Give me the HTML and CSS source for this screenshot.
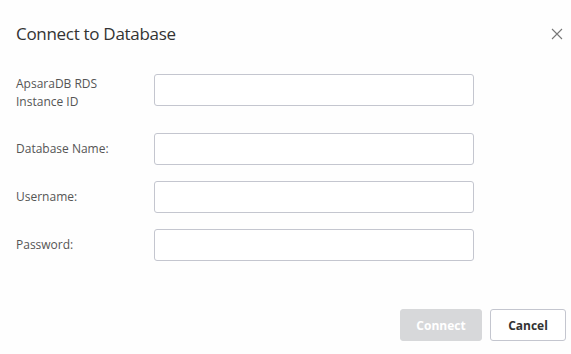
FILE: index.html
```html
<!DOCTYPE html>
<html lang="en">
  <head>
    <meta charset="UTF-8" />
    <meta name="viewport" content="width=device-width, initial-scale=1.0" />
    <title>Connect to Database</title>
    <link rel="stylesheet" href="styles.css">
  </head>
  <body>
    <div class="dialog">
      <div class="dialog-header">
        <h2>Connect to Database</h2>
        <button class="close-btn" aria-label="Close">
          <svg width="12" height="12" viewBox="0 0 12 12">
            <path d="M1 1 L11 11 M11 1 L1 11" stroke="#777" stroke-width="1.1" fill="none" />
          </svg>
        </button>
      </div>

      <form class="dialog-body">
        <div class="form-row first">
          <label>ApsaraDB RDS<br />Instance ID</label>
          <input type="text" name="instance" />
        </div>
        <div class="form-row">
          <label>Database Name:</label>
          <input type="text" name="database" />
        </div>
        <div class="form-row">
          <label>Username:</label>
          <input type="text" name="username" />
        </div>
        <div class="form-row">
          <label>Password:</label>
          <input type="password" name="password" />
        </div>
      </form>

      <div class="dialog-footer">
        <button class="btn btn-primary" disabled>Connect</button>
        <button class="btn btn-normal">Cancel</button>
      </div>
    </div>
  </body>
</html>
```

FILE: styles.css
```css
body {
  margin: 0;
  background-color: #fefefe;
  font-family: "Open Sans", "Noto Sans", sans-serif;
}

.dialog {
  width: 571px;
  height: 354px;
  box-sizing: border-box;
  padding: 0 5px 0 16px;
}

.dialog-header {
  display: flex;
  align-items: center;
  justify-content: space-between;
  padding-top: 22px;
  height: 24px;
}

.dialog-header h2 {
  margin: 0;
  font-size: 17px;
  font-weight: 400;
  letter-spacing: -0.3px;
  color: #333;
  line-height: 24px;
}

.close-btn {
  background: none;
  border: none;
  padding: 0;
  margin-right: 3px;
  width: 12px;
  height: 12px;
  cursor: pointer;
  display: flex;
}

.dialog-body {
  margin-top: 28px;
}

.form-row {
  display: flex;
  align-items: center;
  margin-bottom: 16px;
}

.form-row.first {
  align-items: flex-start;
  margin-bottom: 22px;
}

.form-row label {
  width: 138px;
  font-size: 12px;
  line-height: 18px;
  color: #555;
}

.form-row.first label {
  padding-top: 1px;
}

.form-row input {
  width: 320px;
  height: 32px;
  box-sizing: border-box;
  border: 1px solid #c4c6cf;
  border-radius: 3px;
  background: #fff;
  padding: 0 8px;
  font-size: 12px;
}

.dialog-footer {
  display: flex;
  justify-content: flex-end;
  gap: 8px;
  margin-top: 48px;
}

.btn {
  height: 32px;
  border-radius: 3px;
  font-family: inherit;
  font-size: 12px;
  font-weight: 700;
  cursor: pointer;
}

.btn-primary {
  width: 82px;
  background-color: #d7d8da;
  border: 1px solid #d7d8da;
  color: #fff;
}

.btn-normal {
  width: 76px;
  background-color: #fff;
  border: 1px solid #c4c6cf;
  color: #333;
}
```
